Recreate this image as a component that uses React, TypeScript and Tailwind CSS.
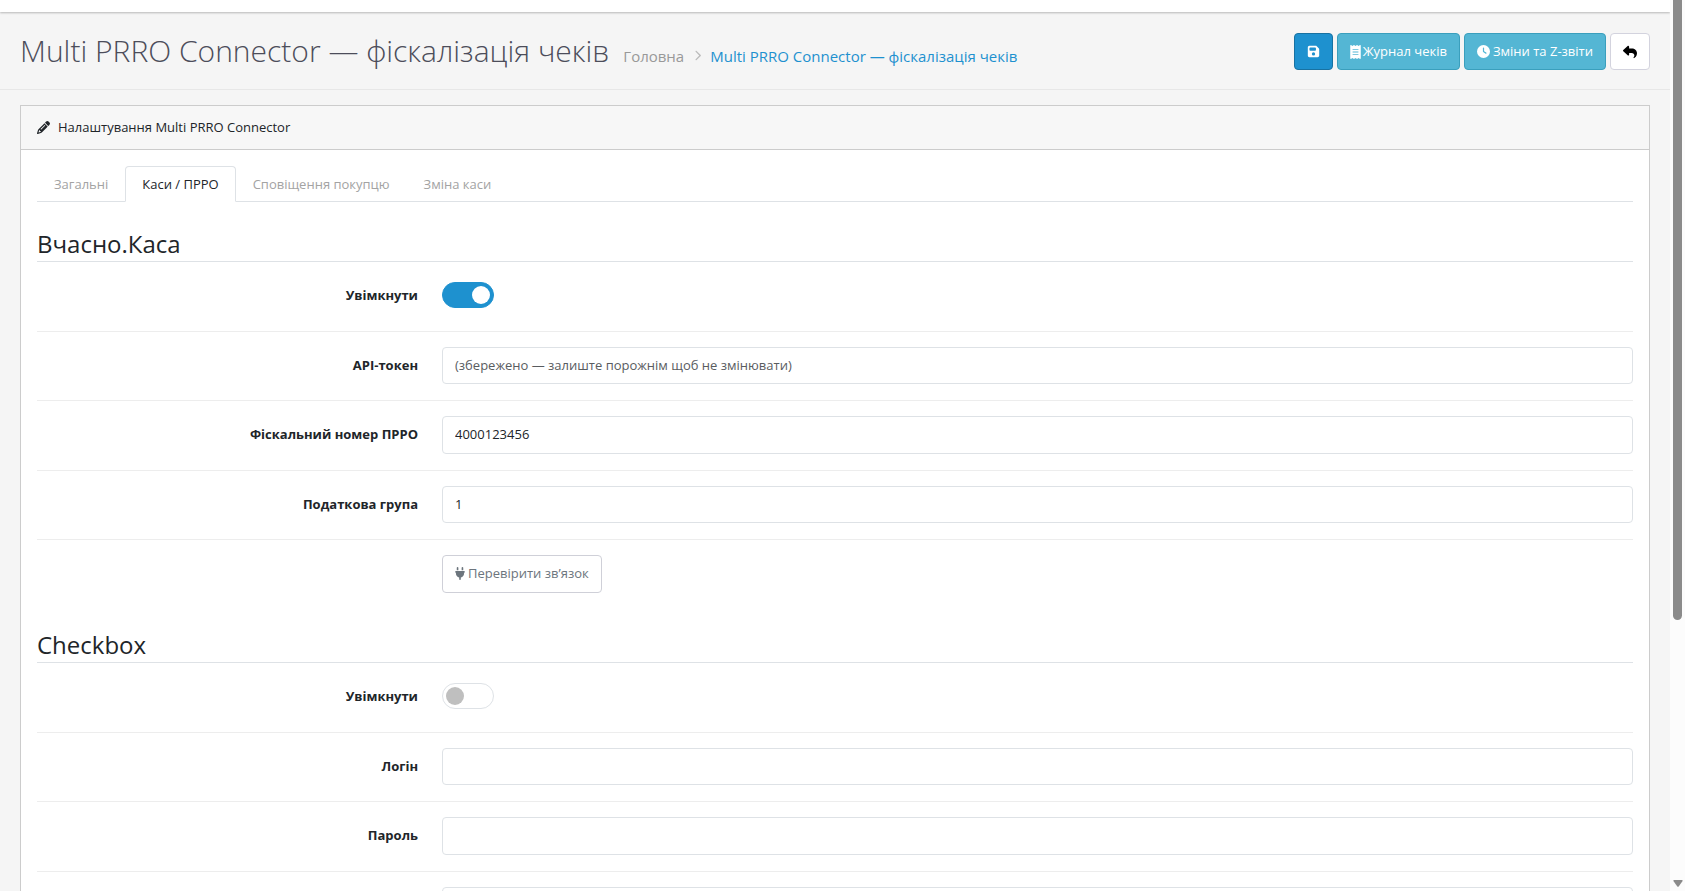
import React from 'react';
import { FaFloppyDisk, FaReceipt, FaClock, FaReply, FaPencil, FaPlug, FaChevronRight } from 'react-icons/fa6';

const TABS = ['Загальні', 'Каси / ПРРО', 'Сповіщення покупцю', 'Зміна каси'];

function Row({ label, id, first, children }: { label?: string; id?: string; first?: boolean; children: React.ReactNode }) {
  return (
    <div className={first ? 'mb-4 grid grid-cols-4 gap-6' : 'mb-4 grid grid-cols-4 gap-6 border-t border-[#ededed] pt-[15px]'}>
      {label ? (
        <label htmlFor={id} className="pt-[9px] text-right font-bold">{label}</label>
      ) : (
        <span />
      )}
      <div className="col-span-3">{children}</div>
    </div>
  );
}

const INPUT =
  'block w-full rounded-[4px] border border-[#dee2e6] bg-white px-3 py-2 leading-normal placeholder:text-[#595c5f]';

function Field({ label, id, value, placeholder, type = 'text' }: { label: string; id: string; value?: string; placeholder?: string; type?: string }) {
  return (
    <Row label={label} id={id}>
      <input id={id} type={type} defaultValue={value} placeholder={placeholder} className={INPUT} />
    </Row>
  );
}

function Toggle({ id, on }: { id: string; on?: boolean }) {
  return (
    <Row label="Увімкнути" id={id} first>
      <div className="flex h-[38px] items-center pb-[2px]">
        <span className="relative block h-[26px] w-[52px]">
          <input
            id={id}
            type="checkbox"
            role="switch"
            defaultChecked={on}
            className="peer block h-full w-full appearance-none rounded-full border border-[#dee2e6] bg-white checked:border-[#1e91cf] checked:bg-[#1e91cf]"
          />
          <span className="pointer-events-none absolute left-1 top-1 size-[18px] rounded-full bg-[#bfbfbf] peer-checked:left-[30px] peer-checked:bg-white" />
        </span>
      </div>
    </Row>
  );
}

function Legend({ children }: { children: React.ReactNode }) {
  return <h2 className="mb-[15px] border-b border-[#dee2e6] text-[24px] leading-[35px]">{children}</h2>;
}

export default function App() {
  return (
    <div className="flex h-screen overflow-hidden bg-[#f5f5f5] font-['Open_Sans',sans-serif] text-[13px] leading-normal text-[#212529]">
      <div className="min-w-0 flex-1 overflow-hidden">
        <div className="h-3 bg-white shadow-[0_1px_2px_rgba(0,0,0,0.25)]" />
        <header className="mb-[15px] flex h-[78px] items-center justify-between border-b border-[#e7e7e7] px-5">
          <div className="flex items-baseline gap-[14px]">
            <h1 className="text-[30px] font-light leading-[36px] text-[#4c4d5a]">Multi PRRO Connector — фіскалізація чеків</h1>
            <nav aria-label="Навігація" className="flex items-center text-[15px]">
              <a href="#home" className="text-[#999999]">Головна</a>
              <FaChevronRight className="ml-2 mr-[7px] size-[11px] text-[#bbbbbb]" />
              <a href="#connector" className="text-[#1e91cf]">Multi PRRO Connector — фіскалізація чеків</a>
            </nav>
          </div>
          <div className="flex gap-1 pt-[2px]">
            <button aria-label="Зберегти" className="flex items-center rounded-[4px] border border-[#1872a2] bg-[#1e91cf] px-3 py-2 text-white">
              <FaFloppyDisk className="size-[13px]" />
            </button>
            <a href="#receipts" className="flex items-center gap-[2px] rounded-[4px] border border-[#3a9fbd] bg-[#54b6d4] px-3 py-2 text-white">
              <FaReceipt className="h-[14px] w-[11px]" />Журнал чеків
            </a>
            <a href="#shifts" className="flex items-center gap-[3px] rounded-[4px] border border-[#3a9fbd] bg-[#54b6d4] px-3 py-2 text-white">
              <FaClock className="size-[13px]" />Зміни та Z-звіти
            </a>
            <a href="#back" aria-label="Назад" className="flex items-center rounded-[4px] border border-[#d3d3de] bg-white px-3 py-2 text-black">
              <FaReply className="size-[14px]" />
            </a>
          </div>
        </header>
        <main className="mx-5 border border-[#cccccc] bg-white">
          <div className="flex h-[44px] items-center gap-2 border-b border-[#cccccc] bg-[#f7f7f7] px-4">
            <FaPencil className="size-[13px]" />
            <span>Налаштування Multi PRRO Connector</span>
          </div>
          <div className="p-4">
            <div role="tablist" className="mb-6 flex border-b border-[#dee2e6]">
              {TABS.map((t, i) => (
                <button
                  key={t}
                  role="tab"
                  aria-selected={i === 1}
                  className={
                    i === 1
                      ? '-mb-px rounded-t-[4px] border border-[#dee2e6] border-b-white bg-white px-4 pb-[6px] pt-2'
                      : '-mb-px border border-transparent px-4 pb-[6px] pt-2 text-[#a3a3a3]'
                  }
                >
                  {t}
                </button>
              ))}
            </div>
            <section className="mb-[34px]">
              <Legend>Вчасно.Каса</Legend>
              <Toggle id="vchasno-on" on />
              <Field id="vchasno-token" label="API-токен" placeholder="(збережено — залиште порожнім щоб не змінювати)" />
              <Field id="vchasno-fn" label="Фіскальний номер ПРРО" value="4000123456" />
              <Field id="vchasno-tax" label="Податкова група" value="1" />
              <Row>
                <button className="flex items-center gap-[3px] rounded-[4px] border border-[#cfd0d8] bg-white px-3 py-2 text-[#6c757d]">
                  <FaPlug className="h-[13px] w-[10px]" />Перевірити зв’язок
                </button>
              </Row>
            </section>
            <section>
              <Legend>Checkbox</Legend>
              <Toggle id="checkbox-on" />
              <Field id="checkbox-login" label="Логін" />
              <Field id="checkbox-password" label="Пароль" type="password" />
              <Row>
                <input type="password" aria-label="PIN-код" className={INPUT} />
              </Row>
            </section>
          </div>
        </main>
      </div>
      <div aria-hidden="true" className="flex w-[15px] flex-col items-center justify-between bg-[#fcfcfc] pb-1">
        <div className="h-[620px] w-[9px] rounded-b-full bg-[#8b8b8b]" />
        <svg viewBox="0 0 10 7" className="h-[7px] w-[10px] fill-[#8b8b8b]">
          <path d="M1 0h8q1 0 .6.9L5.7 6.4q-.7.9-1.4 0L.4.9Q0 0 1 0z" />
        </svg>
      </div>
    </div>
  );
}
